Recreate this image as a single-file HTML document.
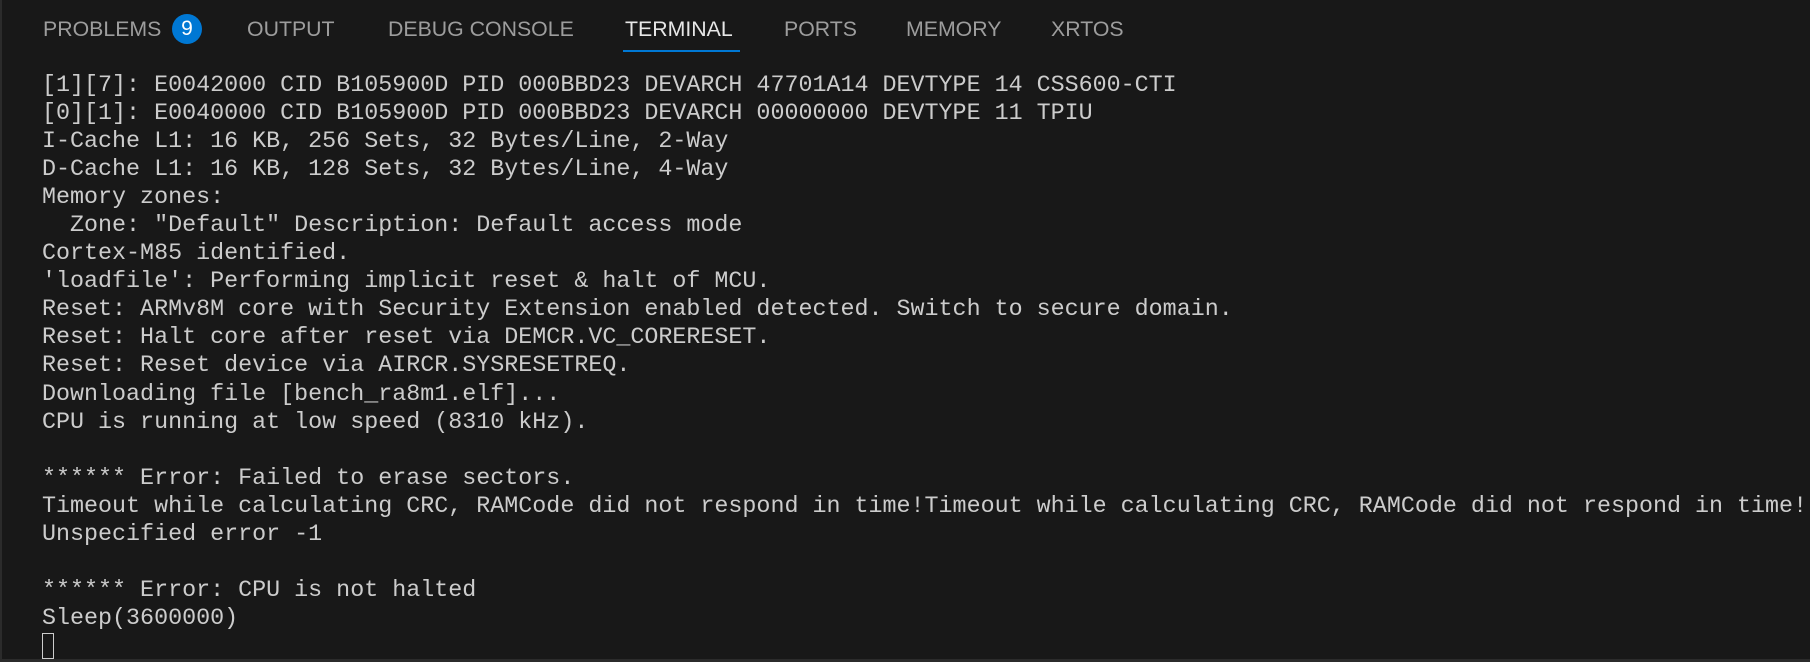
<!DOCTYPE html><html><head><style>
body{margin:0;width:1810px;height:662px;background:#181818;overflow:hidden;position:relative;font-family:"Liberation Sans",sans-serif}
.border{position:absolute;left:0;top:0;width:2px;height:662px;background:#2b2b2b}
.bb{position:absolute;left:0;bottom:0;width:1810px;height:3px;background:#2b2b2b}
.tab{position:absolute;top:16px;font-size:21.3px;color:#9d9d9d;line-height:26px;white-space:nowrap}
.act{color:#e7e7e7}
.ul{position:absolute;left:623px;top:50px;width:117px;height:2px;background:#0078d4}
.badge{position:absolute;left:172px;top:14px;width:30px;height:30px;border-radius:15px;background:#0078d4;color:#fff;font-size:21px;text-align:center;line-height:30px}
pre{position:absolute;left:42px;top:72px;margin:0;font-family:"Liberation Mono",monospace;font-size:23.35px;line-height:28.05px;color:#cccccc}
.cur{display:inline-block;width:12px;height:26px;border:1.5px solid #ccc;box-sizing:border-box;vertical-align:-6px}
</style></head><body>
<div class="border"></div><div class="bb"></div>
<div class="tab" style="left:43px">PROBLEMS</div><div class="badge">9</div>
<div class="tab" style="left:247px">OUTPUT</div>
<div class="tab" style="left:388px">DEBUG CONSOLE</div>
<div class="tab act" style="left:625px">TERMINAL</div>
<div class="ul"></div>
<div class="tab" style="left:784px">PORTS</div>
<div class="tab" style="left:906px">MEMORY</div>
<div class="tab" style="left:1051px">XRTOS</div>
<pre>[1][7]: E0042000 CID B105900D PID 000BBD23 DEVARCH 47701A14 DEVTYPE 14 CSS600-CTI
[0][1]: E0040000 CID B105900D PID 000BBD23 DEVARCH 00000000 DEVTYPE 11 TPIU
I-Cache L1: 16 KB, 256 Sets, 32 Bytes/Line, 2-Way
D-Cache L1: 16 KB, 128 Sets, 32 Bytes/Line, 4-Way
Memory zones:
  Zone: "Default" Description: Default access mode
Cortex-M85 identified.
'loadfile': Performing implicit reset &amp; halt of MCU.
Reset: ARMv8M core with Security Extension enabled detected. Switch to secure domain.
Reset: Halt core after reset via DEMCR.VC_CORERESET.
Reset: Reset device via AIRCR.SYSRESETREQ.
Downloading file [bench_ra8m1.elf]...
CPU is running at low speed (8310 kHz).

****** Error: Failed to erase sectors.
Timeout while calculating CRC, RAMCode did not respond in time!Timeout while calculating CRC, RAMCode did not respond in time!
Unspecified error -1

****** Error: CPU is not halted
Sleep(3600000)
<span class="cur"></span></pre>
</body></html>
